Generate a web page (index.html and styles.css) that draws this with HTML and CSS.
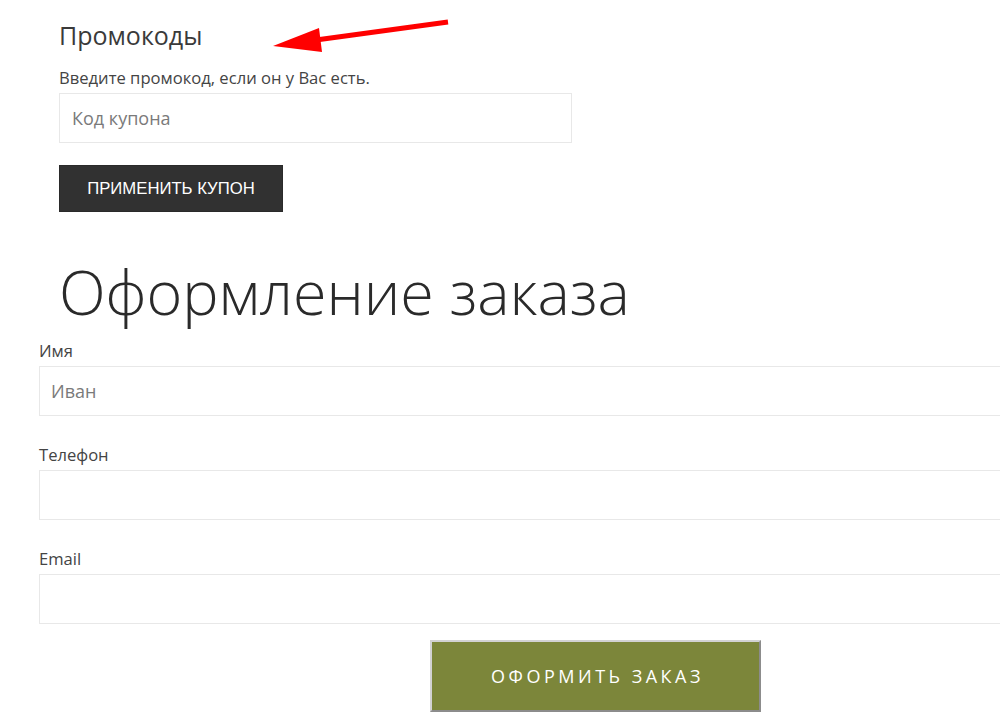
FILE: index.html
```html
<!DOCTYPE html>
<html lang="ru">
<head>
<meta charset="utf-8">
<title>Оформление заказа</title>
<link rel="stylesheet" href="styles.css">
</head>
<body>
<div class="page">
  <section class="promo">
    <h3 class="promo-title">Промокоды</h3>
    <p class="promo-text">Введите промокод, если он у Вас есть.</p>
    <input class="coupon-input" type="text" placeholder="Код купона">
    <button class="coupon-btn" type="button">ПРИМЕНИТЬ КУПОН</button>
    <h1 class="checkout-title">Оформление заказа</h1>
  </section>
  <form class="checkout">
    <div class="field">
      <label class="field-label">Имя</label>
      <input class="field-input" type="text" placeholder="Иван">
    </div>
    <div class="field">
      <label class="field-label">Телефон</label>
      <input class="field-input" type="text">
    </div>
    <div class="field">
      <label class="field-label">Email</label>
      <input class="field-input" type="text">
    </div>
    <div class="submit-row">
      <button class="submit-btn" type="button">ОФОРМИТЬ ЗАКАЗ</button>
    </div>
  </form>
  <svg class="arrow" width="1000" height="80" viewBox="0 0 1000 80" aria-hidden="true">
    <line x1="448" y1="22" x2="316" y2="40" stroke="#ff0000" stroke-width="5"/>
    <polygon points="273,46 319,28 322,52" fill="#ff0000"/>
  </svg>
</div>
</body>
</html>
```

FILE: styles.css
```css
* { box-sizing: border-box; }
html, body {
  margin: 0;
  padding: 0;
  background: #ffffff;
}
body {
  font-family: "Open Sans", "Noto Sans", sans-serif;
  color: #333333;
  overflow: hidden;
}
.page {
  position: relative;
  width: 1000px;
  height: 724px;
  overflow: hidden;
}
.promo {
  padding: 20px 0 0 59px;
}
.promo-title {
  margin: 0;
  font-size: 25px;
  line-height: 30px;
  font-weight: 400;
  color: #3a3a3a;
}
.promo-text {
  margin: 17px 0 0 0;
  font-size: 16.6px;
  line-height: 22px;
  color: #444444;
}
.coupon-input {
  display: block;
  margin: 4px 0 0 0;
  width: 513px;
  height: 50px;
  border: 1px solid #e8e8e8;
  padding: 0 12px;
  font-family: "Open Sans", sans-serif;
  font-size: 18px;
  color: #333;
  outline: none;
  background: #fff;
}
.coupon-input::placeholder { color: #7a7a7a; }
.coupon-btn {
  display: block;
  margin-top: 22px;
  width: 224px;
  height: 47px;
  border: 1px solid #2a2a2a;
  background: #313131;
  color: #ffffff;
  font-family: "Liberation Sans", Arial, sans-serif;
  font-size: 16.7px;
  padding: 0;
  letter-spacing: 0;
}
.checkout-title {
  margin: 40px 0 0 0;
  font-size: 61px;
  line-height: 80px;
  font-weight: 300;
  color: #2a2a2a;
}
.checkout {
  padding: 8px 0 0 39px;
}
.field {
  margin-bottom: 28px;
}
.field-label {
  display: block;
  font-size: 16.6px;
  line-height: 22px;
  color: #444444;
  margin-bottom: 4px;
}
.field-input {
  display: block;
  width: 1100px;
  height: 50px;
  border: 1px solid #e8e8e8;
  padding: 0 11px;
  font-family: "Open Sans", sans-serif;
  font-size: 18px;
  color: #333;
  outline: none;
  background: #fff;
}
.field-input::placeholder { color: #7a7a7a; }
.submit-row {
  margin-top: -12px;
  padding-left: 391px;
}
.submit-btn {
  width: 331px;
  height: 72px;
  background: #7c863a;
  border: 2px solid;
  border-color: #d2d2d2 #8c8c8c #8c8c8c #d2d2d2;
  color: #ffffff;
  font-family: "Open Sans", sans-serif;
  font-size: 18px;
  letter-spacing: 3.5px;
  padding: 0 0 0 4px;
}
.arrow {
  position: absolute;
  left: 0;
  top: 0;
}
```
